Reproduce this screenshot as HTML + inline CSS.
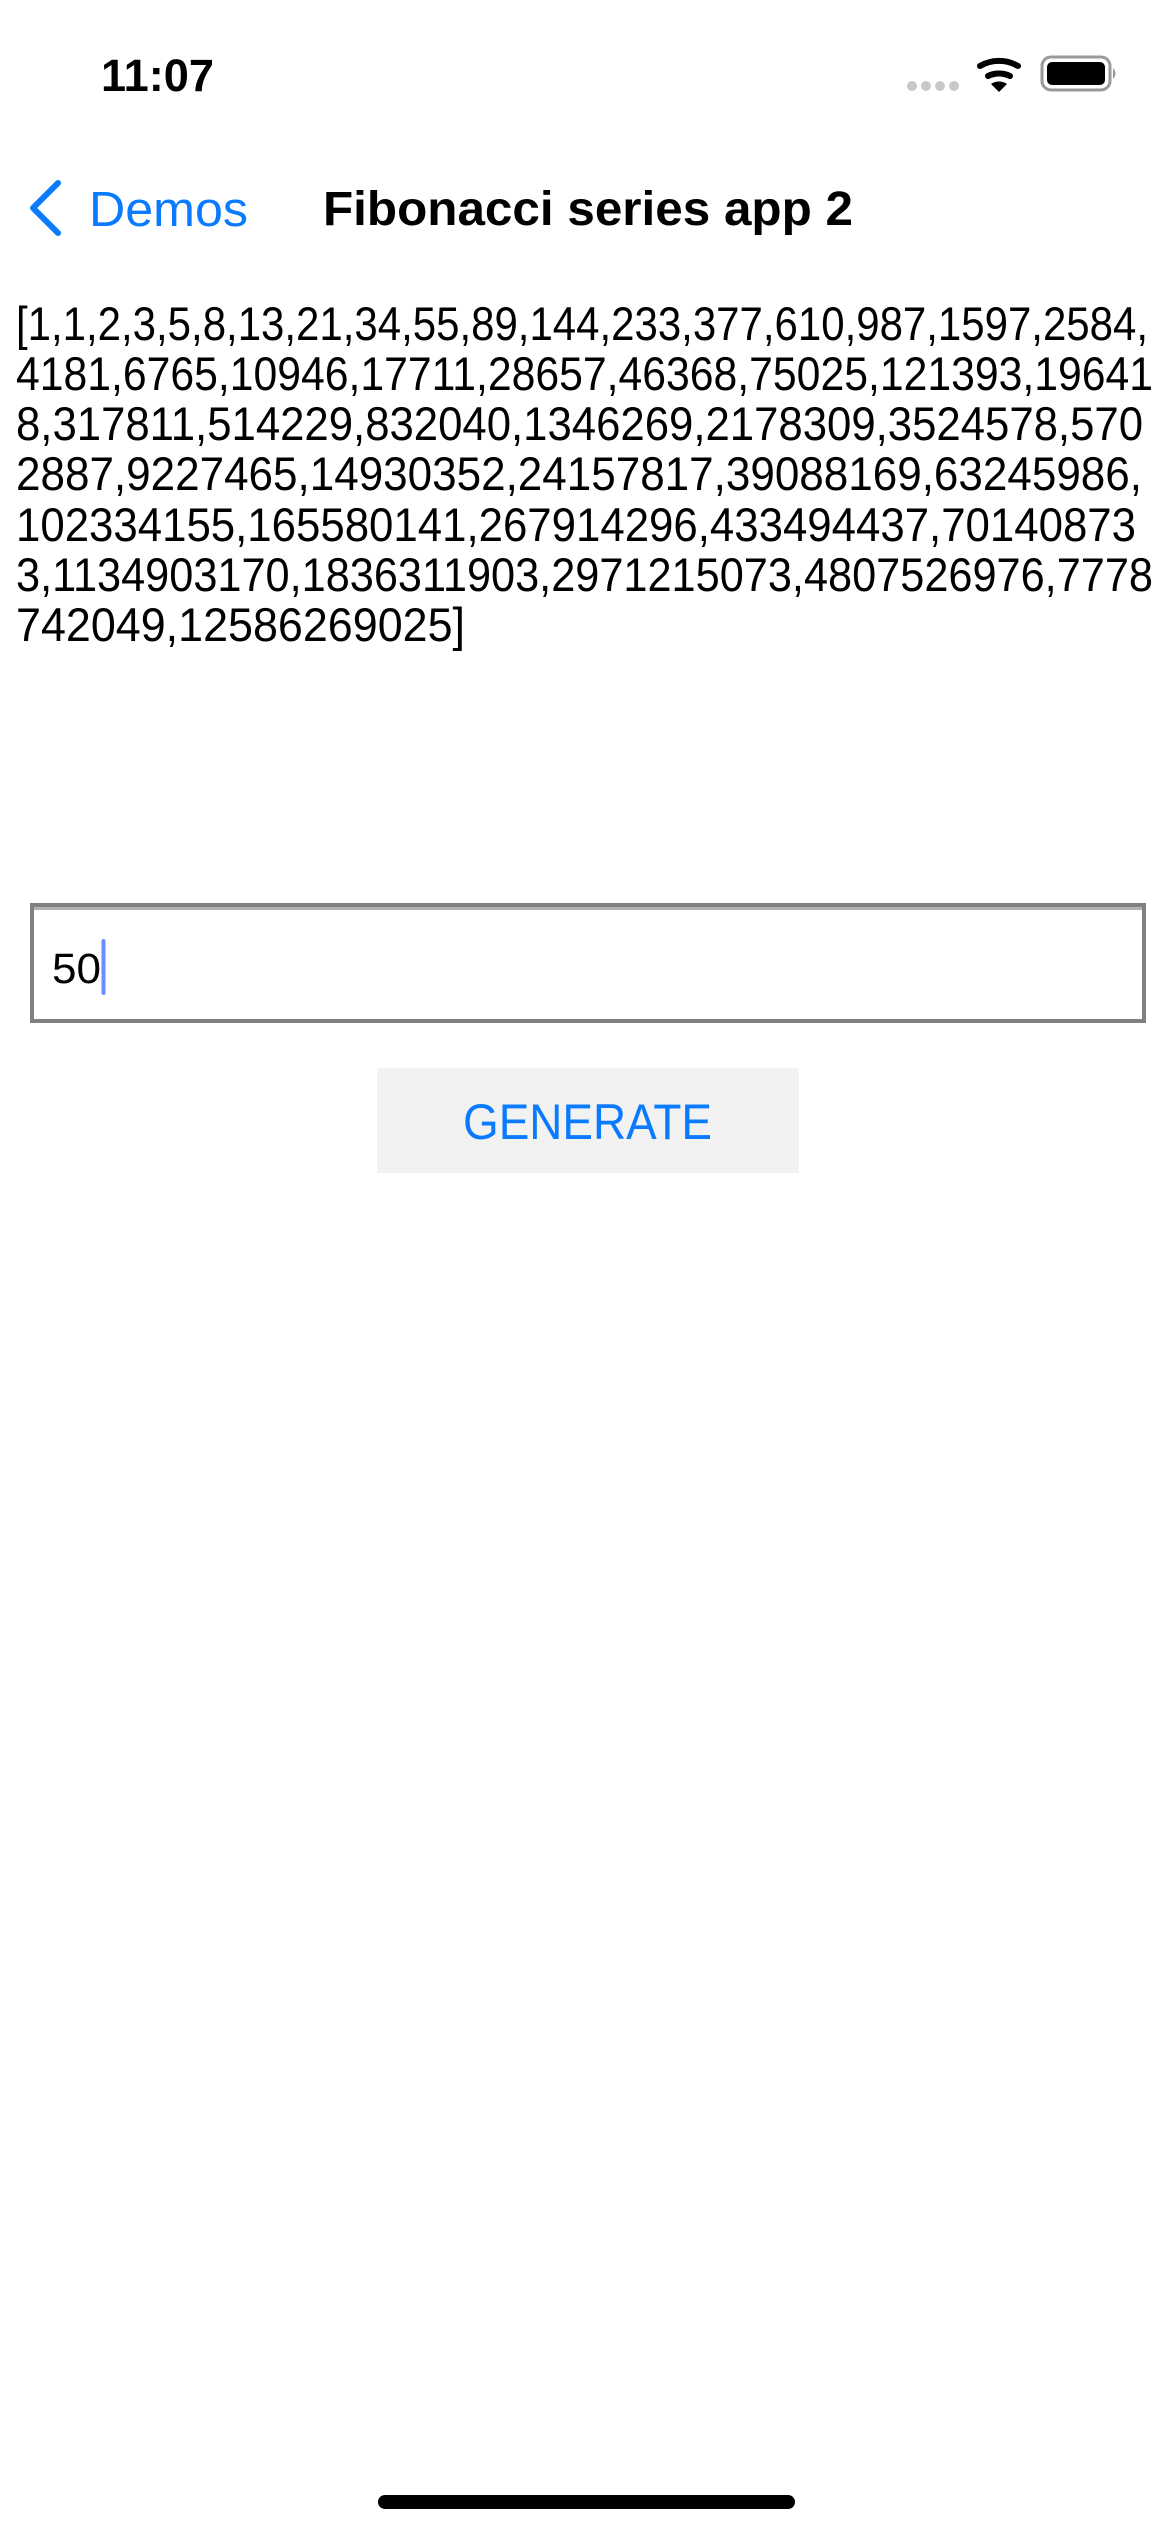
<!DOCTYPE html>
<html><head><meta charset="utf-8"><style>
html,body{margin:0;padding:0;background:#fff;width:1170px;height:2532px;overflow:hidden}
svg{display:block}
</style></head><body>
<svg width="1170" height="2532" xmlns="http://www.w3.org/2000/svg" font-family="Liberation Sans, sans-serif">
<text x="101" y="91" font-size="45" font-weight="bold" textLength="113" lengthAdjust="spacingAndGlyphs">11:07</text>
<g fill="#c8c8c8"><circle cx="912" cy="86" r="5"/><circle cx="926" cy="86" r="5"/><circle cx="940" cy="86" r="5"/><circle cx="954" cy="86" r="5"/></g>
<g fill="none" stroke="#000" stroke-width="6" stroke-linecap="round">
<path d="M980 66 A38 38 0 0 1 1018 66"/>
<path d="M988 76 A26 26 0 0 1 1010 76"/>
</g>
<path d="M991 84 L999 92 L1007 84 A14 14 0 0 0 991 84Z" fill="#000"/>
<rect x="1042" y="57" width="68" height="33" rx="9" fill="none" stroke="#999" stroke-width="3"/>
<rect x="1047" y="62" width="58" height="23" rx="5" fill="#000"/>
<path d="M1113 68 Q1118 73.5 1113 79Z" fill="#999"/>
<path d="M58 183 L33 208 L58 233" fill="none" stroke="#0a7aff" stroke-width="6" stroke-linecap="round" stroke-linejoin="round"/>
<text x="89" y="226" font-size="49" fill="#0a7aff" textLength="159" lengthAdjust="spacingAndGlyphs">Demos</text>
<text x="323" y="225" font-size="48" font-weight="bold" textLength="530" lengthAdjust="spacingAndGlyphs">Fibonacci series app 2</text>
<g font-size="47" fill="#000">
<text x="16" y="340" textLength="1132" lengthAdjust="spacingAndGlyphs">[1,1,2,3,5,8,13,21,34,55,89,144,233,377,610,987,1597,2584,</text>
<text x="16" y="390" textLength="1137" lengthAdjust="spacingAndGlyphs">4181,6765,10946,17711,28657,46368,75025,121393,19641</text>
<text x="16" y="440" textLength="1127" lengthAdjust="spacingAndGlyphs">8,317811,514229,832040,1346269,2178309,3524578,570</text>
<text x="16" y="490" textLength="1126" lengthAdjust="spacingAndGlyphs">2887,9227465,14930352,24157817,39088169,63245986,</text>
<text x="16" y="541" textLength="1120" lengthAdjust="spacingAndGlyphs">102334155,165580141,267914296,433494437,70140873</text>
<text x="16" y="591" textLength="1137" lengthAdjust="spacingAndGlyphs">3,1134903170,1836311903,2971215073,4807526976,7778</text>
<text x="16" y="641" textLength="449" lengthAdjust="spacingAndGlyphs">742049,12586269025]</text>
</g>
<rect x="32" y="905" width="1112" height="116" fill="#fff" stroke="#808080" stroke-width="4"/>
<rect x="34" y="907" width="1108" height="3" fill="#b0b0b0"/>
<text x="52" y="983" font-size="43" textLength="49" lengthAdjust="spacingAndGlyphs">50</text>
<rect x="101.5" y="939" width="4" height="56" rx="2" fill="#6b8cff"/>
<rect x="377" y="1068" width="422" height="105" fill="#f2f2f2"/>
<text x="463" y="1139" font-size="50" fill="#0a7aff" textLength="249" lengthAdjust="spacingAndGlyphs">GENERATE</text>
<rect x="378" y="2495" width="417" height="14" rx="7" fill="#000"/>
</svg>
</body></html>
